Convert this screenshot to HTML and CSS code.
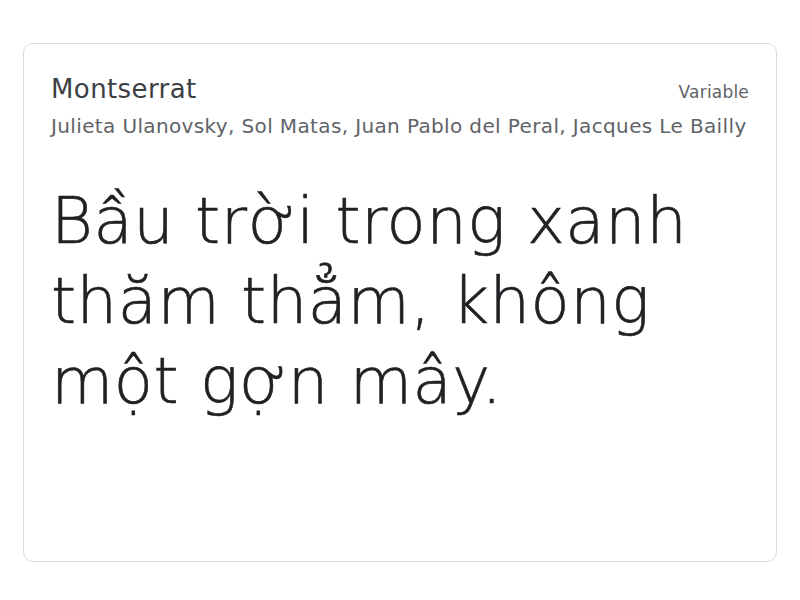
FILE: index.html
```html
<!DOCTYPE html>
<html lang="vi">
<head>
<meta charset="utf-8">
<link rel="stylesheet" href="styles.css">
</head>
<body>
<div class="card">
  <div class="head">
    <div class="name">Montserrat</div>
    <div class="tag">Variable</div>
  </div>
  <div class="authors">Julieta Ulanovsky, Sol Matas, Juan Pablo del Peral, Jacques Le Bailly</div>
  <div class="sample">Bầu trời trong xanh thăm thẳm, không một gợn mây.</div>
</div>
</body>
</html>
```
FILE: styles.css
```css
html, body { margin: 0; padding: 0; background: #fff; }
body { width: 800px; height: 600px; }
.card {
  margin: 43px 0 0 23px;
  width: 754px;
  height: 519px;
  box-sizing: border-box;
  border: 1px solid #dadce0;
  border-radius: 10px;
  padding: 29px 27px 0 27px;
  font-family: "DejaVu Sans", sans-serif;
}
.head { display: flex; justify-content: space-between; align-items: baseline; }
.name { font-size: 26px; line-height: 32px; letter-spacing: 0.4px; color: #3c4043; }
.tag { font-size: 17px; letter-spacing: 0.2px; color: #5f6368; }
.authors {
  margin-top: 8px;
  font-size: 20px;
  line-height: 26px;
  letter-spacing: 0.37px;
  color: #5f6368;
  white-space: nowrap;
}
.sample {
  margin-top: 42px;
  font-weight: 200;
  font-size: 64px;
  line-height: 80px;
  letter-spacing: 0.5px;
  color: #202124;
  -webkit-text-stroke: 0.6px #202124;
}
```
